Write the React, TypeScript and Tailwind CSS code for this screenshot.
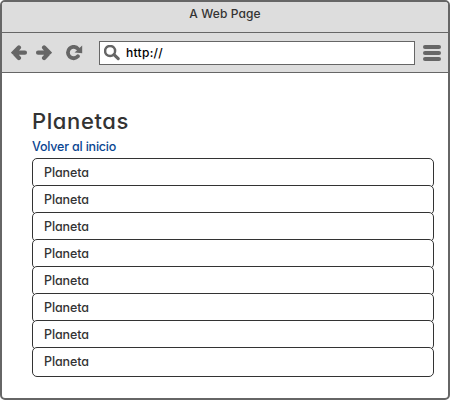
const rows = Array.from({ length: 8 }, () => 'Planeta');

function Arrow({ flip = false }: { flip?: boolean }) {
  return (
    <svg width="17" height="16" viewBox="0 0 17 16" className={flip ? '-scale-x-100' : ''}>
      <path d="M13.9 7.7H3M7.9 2.5L2.9 7.7L7.9 12.9" fill="none" stroke="#666" strokeWidth="4.3" strokeLinecap="round" strokeLinejoin="miter" />
    </svg>
  );
}

function Reload() {
  return (
    <svg width="17" height="16" viewBox="0 0 17 16">
      <path d="M12 3.9A5.7 5.7 0 1 0 11.9 11.3" fill="none" stroke="#666" strokeWidth="3.8" strokeLinecap="round" />
      <path d="M16.2 0.5V8.3L8.6 7.5Z" fill="#666" />
    </svg>
  );
}

function Search() {
  return (
    <svg width="17" height="16" viewBox="0 0 17 16">
      <circle cx="6.1" cy="6" r="5" fill="none" stroke="#666" strokeWidth="2.5" />
      <path d="M10 9.7L14.2 13.6" stroke="#666" strokeWidth="3.2" strokeLinecap="round" />
    </svg>
  );
}

export default function App() {
  return (
    <div className="flex h-[400px] w-[450px] flex-col overflow-hidden rounded-[5px] border-2 border-[#666] bg-white font-[Inter,'Open_Sans',sans-serif] text-[13px] font-medium text-[#333] [font-feature-settings:'cv11','ss03']">
      <header className="h-[31px] shrink-0 border-b border-[#666] bg-[#ddd] pt-[3px] text-center leading-[18px] text-[12px] tracking-[0.1px]">
        A Web Page
      </header>
      <nav className="flex h-10 shrink-0 items-center border-b border-[#666] bg-[#ddd] pl-[9px] pr-[7px]">
        <Arrow />
        <div className="ml-[7px] flex"><Arrow flip /></div>
        <div className="ml-[14px] flex"><Reload /></div>
        <div className="ml-[16px] flex h-6 w-[316px] items-center border border-[#666] bg-white pl-1 text-black">
          <Search />
          <span className="ml-[5px] pt-px text-[12px] tracking-[0.3px]">http://</span>
        </div>
        <div className="ml-2 flex w-[18px] flex-col gap-[2px]">
          <i className="h-1 rounded-[2px] bg-[#666]" />
          <i className="h-1 rounded-[2px] bg-[#666]" />
          <i className="h-1 rounded-[2px] bg-[#666]" />
        </div>
      </nav>
      <main className="pl-[30px] pt-8">
        <h1 className="h-8 text-[22px] leading-8 tracking-[0.6px]">Planetas</h1>
        <a className="block h-[21px] text-[12.5px] leading-[19px] tracking-[-0.2px] text-[#0b4692]">Volver al inicio</a>
        <ul className="w-[402px]">
          {rows.map((name, i) => (
            <li key={i} className="-mb-[3px] relative flex h-[30px] items-center rounded-[5px] border border-[#333] bg-white pl-[11px] text-[12.5px] tracking-[-0.1px]">
              {name}
            </li>
          ))}
        </ul>
      </main>
    </div>
  );
}
